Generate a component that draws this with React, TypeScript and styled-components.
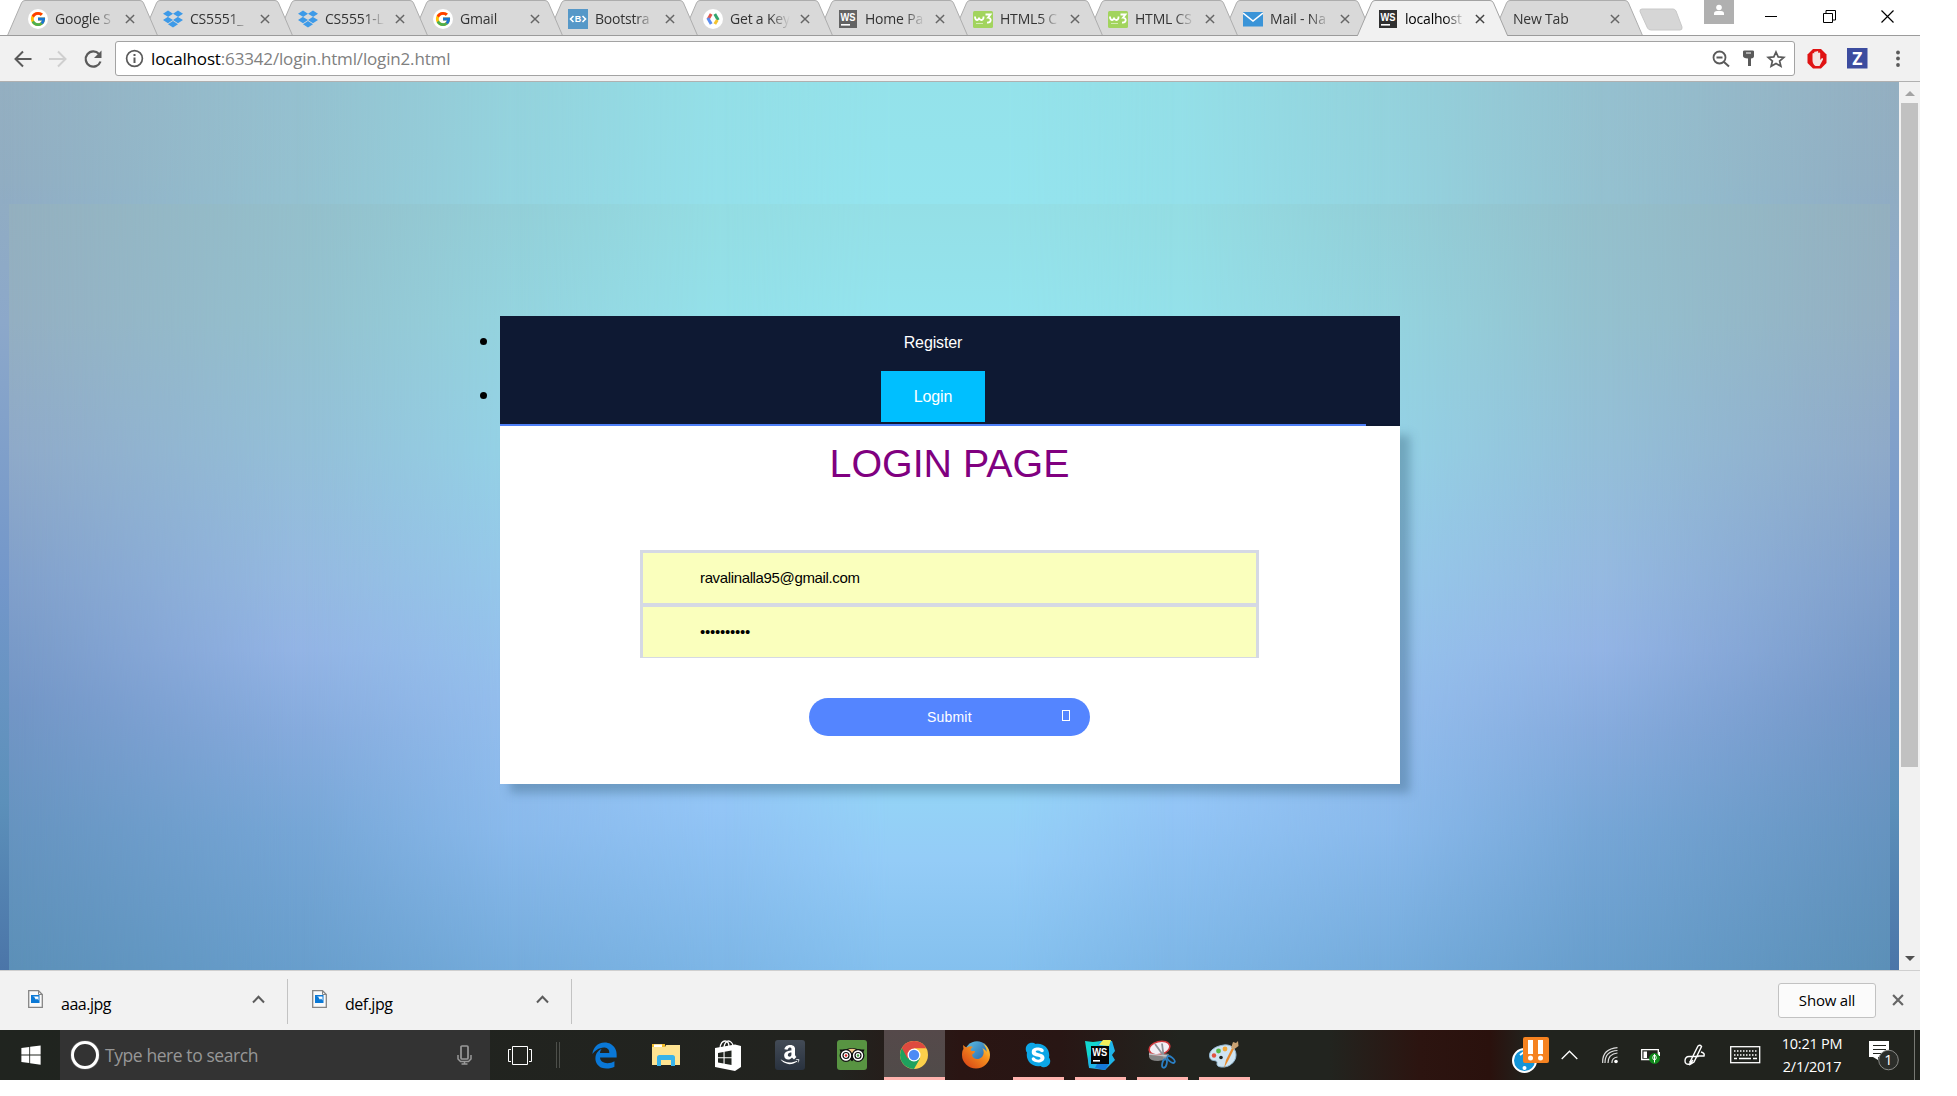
import React from "react";
import styled, { createGlobalStyle, css } from "styled-components";
import { FcGoogle } from "react-icons/fc";
import { FaDropbox, FaAmazon, FaSkype, FaWindows, FaEdgeLegacy } from "react-icons/fa6";

const ui = `"Open Sans", "Noto Sans", sans-serif`;
const arial = `"Liberation Sans", Arial, sans-serif`;

const Global = createGlobalStyle`
  *, *::before, *::after { box-sizing: border-box; }
  body { margin: 0; background: #fff; overflow: hidden; }
  svg { display: block; flex: none; }
`;

const Screen = styled.div`
  width: 1920px;
  height: 1080px;
  display: flex;
  flex-direction: column;
  font-family: ${ui};
`;

/* ---------- tab strip ---------- */

const TabStrip = styled.header`
  height: 36px;
  display: flex;
  align-items: flex-start;
  padding-left: 7px;
  background: linear-gradient(#9b9b9b, #9b9b9b) left bottom / 100% 1px no-repeat #fff;
`;

const TabBox = styled.div<{ $z: number }>`
  position: relative;
  z-index: ${(p) => p.$z};
  width: 151px;
  height: 36px;
  margin-right: -16px;
  padding: 9px 20px 0 21px;
  display: flex;
  flex: none;
`;

const TabShape = styled.svg`
  position: absolute;
  left: 0;
  top: 0;
  z-index: -1;
`;

const Favicon = styled.span`
  width: 20px;
  height: 20px;
  flex: none;
  margin-right: 7px;
`;

const TabTitle = styled.span<{ $active?: boolean; $wide?: boolean }>`
  width: ${(p) => (p.$wide ? 87 : 60)}px;
  height: 20px;
  flex: none;
  white-space: nowrap;
  font-size: 14px;
  line-height: 19px;
  letter-spacing: -0.2px;
  color: ${(p) => (p.$active ? "#000" : "#333")};
  mask-image: linear-gradient(90deg, #000 ${(p) => (p.$wide ? 100 : 66)}%, transparent 100%);
`;

const TabClose = styled.span`
  margin: 5px 0 0 10px;
`;

const NewTabButton = styled.span`
  margin: 8px 0 0 12px;
`;

const UserBadge = styled.span`
  width: 30px;
  height: 24px;
  margin-left: 21px;
  padding: 4px 0 0 9px;
  background: #b0b0b0;
`;

const WindowButtons = styled.div`
  display: flex;
  align-items: center;
  gap: 45px;
  padding: 10px 0 0 31px;
`;

/* ---------- toolbar ---------- */

const Toolbar = styled.div`
  height: 46px;
  display: flex;
  align-items: center;
  padding-left: 13px;
  background: #f1f1f1;
  border-bottom: 1px solid #b0b0b0;
`;

const NavIcons = styled.div`
  display: flex;
  gap: 15px;
  width: 102px;
`;

const AddressBar = styled.div`
  width: 1680px;
  height: 35px;
  display: flex;
  align-items: center;
  padding: 0 8px 0 9px;
  background: #fff;
  border: 1px solid #a3a3a3;
  border-radius: 3px;
`;

const Url = styled.span`
  flex: 1;
  margin-left: 7px;
  font-size: 17px;
  line-height: 30px;
  letter-spacing: -0.16px;
  color: #808080;
`;
const Host = styled.span`
  color: #000;
`;

const BarIcons = styled.div`
  display: flex;
  align-items: center;
  gap: 11px;
`;

const Extensions = styled.div`
  display: flex;
  align-items: center;
  padding-left: 12px;
`;

/* ---------- page ---------- */

const Viewport = styled.div`
  height: 888px;
  display: flex;
`;

const Page = styled.main`
  position: relative;
  width: 1899px;
  height: 888px;
  padding: 122px 9px 0;
  overflow: hidden;
`;

const Panel = styled.section`
  position: relative;
  height: 766px;
  padding: 112px 0 0 491px;
`;

const Backdrop = styled.div<{ $bottom?: number }>`
  position: absolute;
  inset: 0 0 ${(p) => p.$bottom || 0}px;
`;

const BackdropColumn = styled.div<{ $stops: string; $from: number; $to: number }>`
  position: absolute;
  inset: 0;
  background: linear-gradient(${(p) => p.$stops});
  ${(p) =>
    p.$to > 0 &&
    css`
      mask-image: linear-gradient(
        90deg,
        transparent ${p.$from}%,
        #000 ${p.$to}%,
        #000 ${100 - p.$to}%,
        transparent ${100 - p.$from}%
      );
    `}
`;

const Card = styled.div`
  position: relative;
  width: 900px;
`;

const Nav = styled.ul`
  height: 110px;
  margin: 0;
  padding: 0;
  list-style: none;
  background: linear-gradient(#4f80f8, #4f80f8) left bottom / 866px 2px no-repeat #0e1933;
`;

const NavItem = styled.li`
  position: relative;
  height: 54px;
  padding: 1px 34px 2px 0;
  display: flex;
  justify-content: center;
  font-family: ${arial};
  &::before {
    content: "";
    position: absolute;
    left: -20px;
    top: 22px;
    width: 7px;
    height: 7px;
    border-radius: 50%;
    background: #000;
  }
`;

const NavLink = styled.a<{ $active?: boolean }>`
  height: 51px;
  padding: 0 33px;
  font-size: 16px;
  line-height: 52px;
  letter-spacing: -0.12px;
  color: #fff;
  background: ${(p) => (p.$active ? "#00bfff" : "transparent")};
`;

const Form = styled.form`
  height: 358px;
  padding-right: 1px;
  display: flex;
  flex-direction: column;
  align-items: center;
  background: #fff;
  box-shadow: 10px 9px 9px rgba(45, 85, 110, 0.34);
  font-family: ${arial};
`;

const Title = styled.h1`
  margin: 14px 0 0;
  height: 110px;
  font-size: 39.4px;
  font-weight: 400;
  line-height: 46px;
  color: #800080;
`;

const Fields = styled.div`
  width: 619px;
  height: 108px;
  display: flex;
  flex-direction: column;
  gap: 4px;
  padding: 3px 3px 1px;
  background: #d5d9e4;
`;

const Field = styled.div<{ $password?: boolean }>`
  height: 50px;
  padding-left: 57px;
  font-size: 15px;
  line-height: 50px;
  letter-spacing: ${(p) => (p.$password ? "-0.25px" : "-0.36px")};
  background: #faffbd;
  color: #000;
`;

const Submit = styled.button`
  width: 281px;
  height: 38px;
  margin-top: 40px;
  padding: 0 20px 0 118px;
  display: flex;
  align-items: center;
  justify-content: space-between;
  border: 0;
  border-radius: 19px;
  background: #5485ff;
  color: #fff;
  font-family: ${arial};
  font-size: 14px;
  letter-spacing: 0.2px;
`;

const MissingGlyph = styled.span`
  width: 8px;
  height: 11px;
  margin-bottom: 3px;
  border: 1px solid #fff;
`;

const Scrollbar = styled.div`
  width: 21px;
  height: 888px;
  display: flex;
  flex-direction: column;
  align-items: center;
  background: #f1f1f1;
`;

const Thumb = styled.div`
  width: 17px;
  height: 664px;
  margin: 7px 0 189px;
  background: #c1c1c1;
`;

/* ---------- downloads ---------- */

const Downloads = styled.div`
  height: 60px;
  display: flex;
  align-items: center;
  background: #f2f2f2;
  border-top: 1px solid #cfcfcf;
`;

const DownloadItem = styled.div`
  width: 284px;
  height: 45px;
  margin-top: 2px;
  padding: 11px 22px 0 24px;
  display: flex;
  border-right: 1px solid #c3c3c3;
  &:first-child {
    width: 288px;
    padding-left: 28px;
  }
`;

const FileName = styled.span`
  flex: 1;
  margin-left: 18px;
  font-size: 16px;
  line-height: 28px;
  letter-spacing: -0.5px;
  color: #000;
`;

const ShowAll = styled.button`
  width: 98px;
  height: 35px;
  margin: -1px 16px 0 auto;
  padding: 0;
  background: #fbfbfb;
  border: 1px solid #c2c2c2;
  border-radius: 3px;
  font-family: ${ui};
  font-size: 15px;
  line-height: 32px;
  letter-spacing: -0.2px;
  color: #000;
`;

const DownloadsClose = styled.span`
  margin: -1px 16px 0 0;
`;

/* ---------- taskbar ---------- */

const Taskbar = styled.footer`
  height: 50px;
  display: flex;
  align-items: center;
  background: linear-gradient(
    90deg,
    #20241f 0,
    #22231f 840px,
    #2a1513 960px,
    #281614 1060px,
    #22241f 1180px,
    #22241f 1330px,
    #2c1410 1420px,
    #2a110d 1490px,
    #21231e 1530px
  );
`;

const Start = styled.div`
  width: 60px;
  padding-left: 20px;
`;

const Search = styled.div`
  width: 430px;
  height: 50px;
  padding: 0 18px 0 11px;
  display: flex;
  align-items: center;
  background: #333;
`;

const SearchRing = styled.span`
  width: 28px;
  height: 28px;
  border: 3.500px solid #fff;
  border-radius: 50%;
  box-shadow: 0 0 1px #fff;
`;

const SearchHint = styled.span`
  flex: 1;
  margin-left: 6px;
  font-size: 17.5px;
  line-height: 30px;
  letter-spacing: -0.42px;
  color: #979797;
`;

const TaskView = styled.div`
  width: 83px;
  padding-left: 18px;
  display: flex;
  align-items: center;
  gap: 24px;
`;

const Grip = styled.span`
  width: 4px;
  height: 26px;
  border: 1px solid #4d4f4a;
  border-width: 0 1px;
`;

const AppButton = styled.div<{ $state?: "open" | "active" }>`
  width: 62px;
  height: 50px;
  display: flex;
  align-items: center;
  justify-content: center;
  background: ${(p) =>
    p.$state === "active"
      ? "linear-gradient(#ffb3ae,#ffb3ae) center bottom / 61px 3px no-repeat, linear-gradient(#55494a,#504b49) center / 61px 100% no-repeat"
      : p.$state === "open"
        ? "linear-gradient(#ffb3ae,#ffb3ae) center bottom / 51px 3px no-repeat"
        : "none"};
`;

const Tray = styled.div`
  flex: 1;
  height: 50px;
  display: flex;
  align-items: center;
  padding-left: 256px;
`;

const TrayIcon = styled.svg<{ $gap: number }>`
  margin-left: ${(p) => p.$gap}px;
`;

const Clock = styled.div`
  width: 64px;
  margin-left: 19px;
  display: flex;
  flex-direction: column;
  align-items: center;
  font-size: 14.5px;
  line-height: 23px;
  letter-spacing: -0.25px;
  white-space: nowrap;
  color: #fff;
`;

const DesktopEdge = styled.span`
  width: 6px;
  height: 50px;
  margin-left: auto;
  border-left: 1px solid #777873;
`;

/* ---------- drawings ---------- */

const Cross = ({ size = 11, color = "#5a5a5a", w = 1.8 }: { size?: number; color?: string; w?: number }) => (
  <svg width={size} height={size} viewBox="0 0 11 11">
    <path d="M1 1L10 10M10 1L1 10" stroke={color} strokeWidth={w} />
  </svg>
);

const GoogleIcon = () => (
  <svg width="20" height="20">
    <circle cx="10" cy="10" r="10" fill="#fff" />
    <FcGoogle x={1.5} y={1.5} size={17} />
  </svg>
);
const DropboxIcon = () => <FaDropbox size={20} color="#3d9ae8" />;
const BootstrapIcon = () => (
  <svg width="20" height="20">
    <rect width="20" height="20" fill="#5698c8" />
    <path d="M5.5 7L2.5 10L5.5 13M14.5 7L17.5 10L14.5 13" stroke="#fff" strokeWidth="1.6" fill="none" />
    <text x="10" y="13.2" textAnchor="middle" fontFamily="Liberation Sans, sans-serif" fontWeight="700" fontSize="9" fill="#fff">B</text>
  </svg>
);
const DevelopersIcon = () => (
  <svg width="20" height="20">
    <circle cx="10" cy="10" r="10" fill="#fff" />
    <g fill="none" strokeWidth="3">
      <path d="M8.200 5L5 10.500" stroke="#e2574c" />
      <path d="M4.800 9L8.200 15" stroke="#5a8df0" />
      <path d="M11.800 5L15.200 11" stroke="#34a56f" />
      <path d="M14.300 11L11.800 15" stroke="#f4c430" />
    </g>
  </svg>
);
const WsIcon = ({ color = "#636363" }: { color?: string }) => (
  <svg width="20" height="20">
    <rect x="1" y="1" width="18" height="18" fill={color} />
    <text x="10" y="11.500" textAnchor="middle" fontFamily="Liberation Sans, sans-serif" fontWeight="700" fontSize="11" textLength="15" lengthAdjust="spacingAndGlyphs" fill="#fff">WS</text>
    <rect x="3" y="15" width="9" height="1.6" fill="#fff" />
  </svg>
);
const W3Icon = () => (
  <svg width="20" height="20">
    <rect y="2" width="20" height="17" rx="1.5" fill="#a2d45e" />
    <path d="M2 7.500c0 4.500 3.800 4.500 4 1c.2 3.500 5 3.500 4.500-1M12.500 5.500h5l-2.500 3.200c4 0 3.500 5.300-1 4.800" fill="none" stroke="#fff" strokeWidth="1.800" />
    <path d="M3 14.500h7" stroke="#d4ecb5" />
  </svg>
);
const MailIcon = () => (
  <svg width="20" height="20">
    <rect y="3" width="20" height="14.500" fill="#3a94d8" />
    <path d="M0 4L10 12L20 4" stroke="#fff" strokeWidth="1.600" fill="none" />
  </svg>
);

const DocIcon = () => (
  <svg width="15" height="18" viewBox="0 0 15 18">
    <path d="M.7.700H10.500L14.300 4.500V17.300H.7Z" fill="#fafafa" stroke="#858585" strokeWidth="1.300" />
    <path d="M10.500.700V4.500H14.300" fill="none" stroke="#858585" />
    <rect x="3" y="5" width="8.500" height="8" fill="#0b79d6" />
    <path d="M4.500 6.500h6v4l-1.500-2l-1 1.300l-1.500-2.300v-.5z" fill="#fff" />
  </svg>
);

const StoreIcon = () => (
  <svg width="26" height="31" viewBox="0 0 26 31">
    <path d="M0 8L20 4.500L26 6V27L20 31L0 27Z" fill="#fff" />
    <path d="M5 9C5 3 8 1 10 1S14 3 14 7M9 7C10 2 12 1 13.500 1S18 3 18 6" fill="none" stroke="#fff" strokeWidth="1.300" />
    <path d="M3 13L8.500 12V17.200H3ZM9.600 11.800L16.500 10.500V17.200H9.600ZM3 18.300H8.500V23.500L3 22.600ZM9.600 18.300H16.500V25L9.600 23.700Z" fill="#20241f" />
  </svg>
);
const ExplorerIcon = () => (
  <svg width="28" height="24" viewBox="0 0 28 24">
    <path d="M0 1H13V4H0Z" fill="#f3bd2a" />
    <rect x="2" y="1.500" width="8" height="2.500" fill="#fff" />
    <path d="M0 4H13L14 2H28V22H0Z" fill="#fee391" />
    <path d="M5 23V14.500Q5 12 7.500 12H20.500Q23 12 23 14.500V23H19V17H9V23Z" fill="#38b3ea" />
  </svg>
);
const AmazonIcon = () => (
  <svg width="30" height="30">
    <defs>
      <linearGradient id="amz" x2="0" y2="1">
        <stop stopColor="#434b56" />
        <stop offset="1" stopColor="#29323f" />
      </linearGradient>
    </defs>
    <rect width="30" height="30" rx="3" fill="url(#amz)" />
    <FaAmazon x={4} y={3.5} size={22} color="#fff" />
  </svg>
);
const TripIcon = () => (
  <svg width="30" height="30">
    <rect width="30" height="30" rx="3" fill="#589442" />
    <path d="M2.500 9.500H8Q15 6.500 22 9.500H27.500L26 13L15 21L4 13Z" fill="#111" />
    <path d="M11 9.500Q15 8 19 9.500L15 14Z" fill="#f6c88a" />
    {[9, 21].map((x) => (
      <g key={x}>
        <circle cx={x} cy="15.500" r="5.800" fill="#fff" stroke="#111" strokeWidth="1.300" />
        <circle cx={x} cy="15.500" r="3" fill="#fff" stroke="#111" strokeWidth="1.200" />
        <circle cx={x} cy="15.500" r="1.200" fill={x === 9 ? "#d22" : "#3a9a3a"} />
      </g>
    ))}
    <path d="M13.500 18.500L15 21.500L16.500 18.500Z" fill="#111" />
  </svg>
);
const ChromeIcon = () => (
  <svg width="28" height="28" viewBox="0 0 28 28">
    <circle cx="14" cy="14" r="14" fill="#fcd04b" />
    <path d="M14 14L1.900 7A14 14 0 0 0 14 28L20 17.500Z" fill="#1ea15e" />
    <path d="M14 14L7.500 17.500L1.900 7A14 14 0 0 1 26.200 7.300H14Z" fill="#de4a3f" />
    <circle cx="14" cy="14" r="6.500" fill="#fff" />
    <circle cx="14" cy="14" r="5.200" fill="#4c8bf5" />
  </svg>
);
const FirefoxIcon = () => (
  <svg width="28" height="28" viewBox="0 0 28 28">
    <defs>
      <linearGradient id="ffb" x1="0" y1="0" x2="1" y2="1">
        <stop stopColor="#5ec4e8" />
        <stop offset="1" stopColor="#1d4f9c" />
      </linearGradient>
      <linearGradient id="ffo" x1="1" y1="0" x2="0" y2="1">
        <stop stopColor="#ffe24a" />
        <stop offset=".35" stopColor="#f7931e" />
        <stop offset="1" stopColor="#d53a15" />
      </linearGradient>
    </defs>
    <circle cx="15" cy="12.500" r="12.300" fill="url(#ffb)" />
    <path d="M1 4C1 4 3 6 5 6.500C7 5 9 5 11 6C9 7 8.500 8.500 9 10H13C13 12 11 12.500 10 14C11 19 17 19 20 16C22.500 13 22 9 20 7C23 8 24 10 24.500 11C25 8 23 4 20 2C25 4 28 9 28 14A14 13.500 0 0 1 0 14C0 11 .5 9 1.500 8Z" fill="url(#ffo)" />
  </svg>
);
const SkypeIcon = () => (
  <svg width="28" height="28">
    <circle cx="14" cy="14" r="10" fill="#fff" />
    <FaSkype size={28} color="#0ca6e6" />
  </svg>
);
const WebstormIcon = () => (
  <svg width="30" height="30" viewBox="0 0 30 30">
    <path d="M0 1L8 2L16 1L12 12L4 27Z" fill="#12d6cf" />
    <path d="M15 1L27 1L30 11L27 15L30 20L22 28L20 30L4 28L3 18Z" fill="#1fb4e8" />
    <path d="M14 5L18 0H26L24 6Z" fill="#f3f05a" />
    <path d="M12 24H24L20 30L10 28Z" fill="#1579d8" />
    <rect x="6" y="6" width="18" height="18" fill="#050505" />
    <text x="14.700" y="15.500" textAnchor="middle" fontFamily="Liberation Sans, sans-serif" fontWeight="700" fontSize="10.500" textLength="15" lengthAdjust="spacingAndGlyphs" fill="#fff">WS</text>
    <rect x="8" y="20" width="7" height="1.600" fill="#fff" />
  </svg>
);
const SnipIcon = () => (
  <svg width="28" height="30" viewBox="0 0 28 30">
    <path d="M1 11V17Q2 21 10 21Q20 20 21 14Z" fill="#858585" />
    <ellipse cx="11.500" cy="8" rx="10.500" ry="6.500" transform="rotate(-14 11.500 8)" fill="#f3eff5" stroke="#d0393d" strokeWidth="1.500" />
    <path d="M7 4L18 19M14 3.500L16 19" stroke="#8f9298" strokeWidth="1.800" />
    <path d="M1 14L19 16" stroke="#c5c5c8" strokeWidth="1.400" />
    <ellipse cx="16.500" cy="23.500" rx="2.200" ry="4.300" transform="rotate(14 16.500 23.500)" fill="none" stroke="#2a7fc4" strokeWidth="1.800" />
    <ellipse cx="23" cy="19.500" rx="2.200" ry="4.500" transform="rotate(-50 23 19.500)" fill="none" stroke="#2a7fc4" strokeWidth="1.800" />
  </svg>
);
const PaintIcon = () => (
  <svg width="30" height="28" viewBox="0 0 30 28">
    <path d="M15 4C22 3 27 8 27 14C27 21 20 27 12 26C5 25 10 21 7 20C4 19 1 20 .5 15C0 9 7 5 15 4Z" fill="#cfe4f2" stroke="#93b7d0" />
    <circle cx="12" cy="16.500" r="1.800" fill="#20241f" />
    <circle cx="5" cy="14.500" r="2.200" fill="#e25241" />
    <circle cx="9.500" cy="10" r="2.400" fill="#57b847" />
    <circle cx="16" cy="8" r="2.400" fill="#f2a73a" />
    <path d="M15 27L17 19L23 7L25 8L19 20Z" fill="#e8892b" />
    <path d="M22 7L24 1L27 2L29 0L29.500 5L25.500 8Z" fill="#c9a273" />
  </svg>
);

/* ---------- data ---------- */

const tabs = [
  { icon: <GoogleIcon />, title: "Google S" },
  { icon: <DropboxIcon />, title: "CS5551_" },
  { icon: <DropboxIcon />, title: "CS5551-L" },
  { icon: <GoogleIcon />, title: "Gmail" },
  { icon: <BootstrapIcon />, title: "Bootstra" },
  { icon: <DevelopersIcon />, title: "Get a Key" },
  { icon: <WsIcon />, title: "Home Pa" },
  { icon: <W3Icon />, title: "HTML5 C" },
  { icon: <W3Icon />, title: "HTML CS" },
  { icon: <MailIcon />, title: "Mail - Na" },
  { icon: <WsIcon color="#303030" />, title: "localhost", active: true },
  { icon: null, title: "New Tab" },
];

const apps: { icon: React.ReactNode; state?: "open" | "active" }[] = [
  { icon: <FaEdgeLegacy size={27} color="#0a78d7" /> },
  { icon: <ExplorerIcon /> },
  { icon: <StoreIcon /> },
  { icon: <AmazonIcon /> },
  { icon: <TripIcon /> },
  { icon: <ChromeIcon />, state: "active" },
  { icon: <FirefoxIcon /> },
  { icon: <SkypeIcon />, state: "open" },
  { icon: <WebstormIcon />, state: "open" },
  { icon: <SnipIcon />, state: "open" },
  { icon: <PaintIcon />, state: "open" },
];

const outerColumns = [
  { from: 0, to: 0, stops: "#94afc1 0, #91adc2 100px, #8ca8ca 240px, #7397ca 500px, #5c90ba 720px, #4b75a8 888px" },
  { from: 0, to: 15.5, stops: "#95c0cf 0, #94c1d0 122px" },
  { from: 15.5, to: 27, stops: "#94d2dc 0, #94d4e0 122px" },
  { from: 27, to: 38, stops: "#94dfe7 0, #94e0ea 122px" },
  { from: 38, to: 47, stops: "#94e2ea 0, #94e4ee 122px" },
];
const sideColumn = [outerColumns[0]];
const innerColumns = [
  { from: 0, to: 0, stops: "#94b0bf 0, #94afc2 116px, #8faac9 246px, #81a0cb 376px, #7396c6 496px, #6694c0 626px, #5c90b8 766px" },
  { from: 0, to: 15.5, stops: "#94bfcb 0, #94c1cf 116px, #94bfd8 246px, #95b9e1 376px, #93b4e5 446px, #86abdd 526px, #76a6d6 626px, #689ecc 766px" },
  { from: 15.5, to: 27, stops: "#93cfd8 0, #94d4df 116px, #94d2e6 246px, #95c8ea 376px, #94beed 496px, #8abaec 626px, #75acdc 766px" },
  { from: 27, to: 38, stops: "#94dde3 0, #94e1ea 116px, #94dcec 246px, #94d4ee 376px, #94cdf3 496px, #93c5f6 606px, #7db6e6 766px" },
  { from: 38, to: 47, stops: "#94dfe6 0, #94e4ee 116px, #94dcee 376px, #94d4f6 586px, #94ccf7 656px, #84c0ee 766px" },
];

const Gradient = ({ columns, bottom }: { columns: typeof innerColumns; bottom?: number }) => (
  <Backdrop $bottom={bottom}>
    {columns.map((c, i) => (
      <BackdropColumn key={i} $stops={c.stops} $from={c.from} $to={c.to} />
    ))}
  </Backdrop>
);

const Tab = ({ icon, title, active, z }: { icon: React.ReactNode; title: string; active?: boolean; z: number }) => (
  <TabBox $z={z}>
    <TabShape width="151" height="36">
      <path
        d="M.5 35.500L14.500 3Q15.500.500 18 .500H133Q135.500.500 136.500 3L150.500 35.500"
        fill={active ? "#f1f1f1" : "#d9d9d9"}
        stroke={active ? "#a3a3a3" : "#adadad"}
      />
      <path d={active ? "M1 35.500H150" : "M0 35.500H151"} stroke={active ? "#f1f1f1" : "#9b9b9b"} />
    </TabShape>
    {icon && <Favicon>{icon}</Favicon>}
    <TabTitle $active={active} $wide={!icon}>{title}</TabTitle>
    <TabClose>
      <Cross size={10} color={active ? "#444" : "#666"} w={1.600} />
    </TabClose>
  </TabBox>
);

export default function App() {
  return (
    <Screen>
      <Global />
      <TabStrip>
        {tabs.map((t, i) => (
          <Tab key={i} {...t} z={t.active ? 30 : 20 - i} />
        ))}
        <NewTabButton>
          <svg width="44" height="23">
            <path d="M3 1H34Q36 1 37 3L43 19Q43.500 22 41 22H12Q9.500 22 8.500 20L1 3.500Q.5 1 3 1Z" fill="#d6d6d6" stroke="#c8c8c8" />
          </svg>
        </NewTabButton>
        <UserBadge>
          <svg width="12" height="12" viewBox="0 0 12 12">
            <circle cx="6" cy="3.500" r="2.800" fill="#fff" />
            <path d="M1 11V9.500Q1 7 4 7H8Q11 7 11 9.500V11Z" fill="#fff" />
          </svg>
        </UserBadge>
        <WindowButtons>
          <svg width="13" height="13"><path d="M0 6.500H12" stroke="#000" /></svg>
          <svg width="13" height="13"><path d="M.5 3.500H9.500V12.500H.5ZM3 3V.500H12.500V10H10" fill="none" stroke="#000" /></svg>
          <svg width="13" height="13"><path d="M.5.500L12.500 12.500M12.500.500L.5 12.500" stroke="#000" strokeWidth="1.200" /></svg>
        </WindowButtons>
      </TabStrip>

      <Toolbar>
        <NavIcons>
          <svg width="20" height="20"><path d="M18.500 10H3M10 2.500L2.500 10L10 17.500" fill="none" stroke="#5a5a5a" strokeWidth="2" /></svg>
          <svg width="20" height="20"><path d="M1 10H17M10 2.500L17.500 10L10 17.500" fill="none" stroke="#cfcfcf" strokeWidth="2" /></svg>
          <svg width="20" height="20">
            <path d="M16 5A7.600 7.600 0 1 0 17.500 12.500" fill="none" stroke="#5a5a5a" strokeWidth="2.200" />
            <path d="M18.500 1.500V9H11Z" fill="#5a5a5a" />
          </svg>
        </NavIcons>
        <AddressBar>
          <svg width="19" height="19">
            <circle cx="9.500" cy="9.500" r="7.900" fill="none" stroke="#5a5a5a" strokeWidth="1.700" />
            <path d="M9.500 8.500V14M9.500 5V7" stroke="#5a5a5a" strokeWidth="2" />
          </svg>
          <Url><Host>localhost</Host>:63342/login.html/login2.html</Url>
          <BarIcons>
            <svg width="19" height="18">
              <circle cx="7.500" cy="7.500" r="6" fill="none" stroke="#5a5a5a" strokeWidth="1.800" />
              <path d="M4.500 7.500H10.500M12 12L17 16.500" stroke="#5a5a5a" strokeWidth="2" />
            </svg>
            <svg width="13" height="17">
              <path d="M1 1.500Q1 .500 2.500.500H10.500Q12 .500 12 1.500V6Q12 8 9 8.500V16H6V8.500Q1 8 1 6Z" fill="#5a5a5a" />
              <path d="M4 3H9" stroke="#fff" />
            </svg>
            <svg width="20" height="18" viewBox="0 0 20 18">
              <path d="M10 2L12.200 6.900L17.800 7.400L13.600 11L14.900 16.300L10 13.500L5.100 16.300L6.400 11L2.200 7.400L7.800 6.900Z" fill="none" stroke="#5a5a5a" strokeWidth="1.700" />
            </svg>
          </BarIcons>
        </AddressBar>
        <Extensions>
          <svg width="20" height="20">
            <path d="M6 0H14L19.500 5.500V14L14 19.500H6L.5 14V5.500Z" fill="#e01313" />
            <path d="M5.500 11V4.500Q6.500 3.500 7.200 4.500V9V3Q8.300 2 9.200 3V9V2.500Q10.300 1.500 11.200 2.500V9V4Q12.300 3 13.200 4V11L15 9Q16.500 9 16 10.500L12.500 17H8.500Q5.500 15 5.500 11Z" fill="#f3e4e2" />
          </svg>
          <svg width="61" height="21" viewBox="-20 0 61 21">
            <rect x="0" y="0" width="20.500" height="20.500" fill="#3c4c9f" />
            <text x="10.300" y="16.500" textAnchor="middle" fontFamily="Open Sans, sans-serif" fontWeight="700" fontSize="17.500" fill="#fff">Z</text>
          </svg>
          <TrayIcon $gap={8} width="4" height="18">
            {[2.500, 8.500, 15].map((y) => <circle key={y} cx="2" cy={y} r="1.900" fill="#5a5a5a" />)}
          </TrayIcon>
        </Extensions>
      </Toolbar>

      <Viewport>
        <Page>
          <Gradient columns={sideColumn} />
          <Gradient columns={outerColumns.map((c, i) => (i ? c : { ...c, stops: "#94afc1 0, #91adc2 100px, #90acc4 122px" }))} bottom={766} />
          <Panel>
            <Gradient columns={innerColumns} />
            <Card>
              <Nav>
                <NavItem><NavLink>Register</NavLink></NavItem>
                <NavItem><NavLink $active>Login</NavLink></NavItem>
              </Nav>
              <Form>
                <Title>LOGIN PAGE</Title>
                <Fields>
                  <Field>ravalinalla95@gmail.com</Field>
                  <Field $password>••••••••••</Field>
                </Fields>
                <Submit type="button">
                  Submit
                  <MissingGlyph />
                </Submit>
              </Form>
            </Card>
          </Panel>
        </Page>
        <Scrollbar>
          <svg width="10" height="14">
            <path d="M0 14L5 9L10 14Z" fill="#a3a3a3" />
          </svg>
          <Thumb />
          <svg width="10" height="5"><path d="M0 0H10L5 5Z" fill="#505050" /></svg>
        </Scrollbar>
      </Viewport>

      <Downloads>
        {["aaa.jpg", "def.jpg"].map((name) => (
          <DownloadItem key={name}>
            <DocIcon />
            <FileName>{name}</FileName>
            <svg width="13" height="16" viewBox="0 -5 13 16"><path d="M1 7.500L6.500 1.800L12 7.500" fill="none" stroke="#5c5c5c" strokeWidth="2" /></svg>
          </DownloadItem>
        ))}
        <ShowAll>Show all</ShowAll>
        <DownloadsClose><Cross size={12} color="#666" w={2} /></DownloadsClose>
      </Downloads>

      <Taskbar>
        <Start><FaWindows size={22} color="#fff" /></Start>
        <Search>
          <SearchRing />
          <SearchHint>Type here to search</SearchHint>
          <svg width="15" height="20">
            <rect x="4" y="1" width="7" height="13" fill="none" stroke="#999" strokeWidth="1.700" rx="1" />
            <path d="M1 10V14L3.500 16.500H11.500L14 14V10M7.500 16.500V19M4.500 19H10.500" fill="none" stroke="#999" strokeWidth="1.500" />
          </svg>
        </Search>
        <TaskView>
          <svg width="24" height="19">
            <path d="M4.500.500H19.500V18.500H4.500ZM3 3.500H.500V15.500H3M21 3.500H23.500V15.500H21" fill="none" stroke="#fff" />
          </svg>
          <Grip />
        </TaskView>
        {apps.map((a, i) => (
          <AppButton key={i} $state={a.state}>{a.icon}</AppButton>
        ))}
        <Tray>
          <svg width="38" height="38">
            <circle cx="13.500" cy="24.500" r="11.500" fill="#1294d8" stroke="#fff" strokeWidth="2" />
            <path d="M9 19l4-3" stroke="#fff" strokeWidth="2" />
            <circle cx="13.500" cy="32" r="2" fill="#fff" />
            <rect x="12" y="1" width="26" height="26" rx="2" fill="#f58220" />
            <path d="M17 4H22V18H17ZM27 4H32V18H27Z" fill="#fff" />
            <circle cx="19.500" cy="22" r="2.500" fill="#fff" />
            <circle cx="29.500" cy="22" r="2.500" fill="#fff" />
          </svg>
          <TrayIcon $gap={12} width="17" height="10"><path d="M.7 9L8.500 1.200L16.300 9" fill="none" stroke="#fff" strokeWidth="1.300" /></TrayIcon>
          <TrayIcon $gap={24} width="17" height="17">
            <circle cx="14" cy="14.500" r="1.800" fill="#fff" />
            <path d="M10 16Q9.500 11 15.500 10M6 16Q6 7 15.500 6M3 16Q3 4 15.500 3.500M.7 16Q0 2 15.500.700" fill="none" stroke="#ddd" strokeWidth="1.200" />
          </TrayIcon>
          <TrayIcon $gap={22} width="20" height="17">
            <path d="M.7 2.700H17.300V12.500H.7Z" fill="none" stroke="#fff" strokeWidth="1.300" />
            <path d="M18.500 5V9" stroke="#fff" />
            <rect x="2.500" y="4.500" width="3.500" height="6.500" fill="#fff" />
            <circle cx="13.500" cy="11.500" r="5.400" fill="#118a1c" />
            <path d="M13.500 7.500Q17 11 13.500 13.500Q10 11 13.500 7.500V15.500" stroke="#fff" fill="none" />
          </TrayIcon>
          <TrayIcon $gap={23} width="21" height="22">
            <path d="M9 16L6 20Q1 21 1 17Q1 12.500 5 12.500H14.500M6 18L14 2Q16 .5 17.500 2.500L10 18L6 20.500V17M17 8Q21 9 20 12H14" fill="none" stroke="#fff" strokeWidth="1.400" />
          </TrayIcon>
          <TrayIcon $gap={25} width="31" height="18">
            <rect x=".7" y=".7" width="29" height="16" fill="none" stroke="#fff" strokeWidth="1.300" />
            <path d="M4 5H27M4 9H27" stroke="#fff" strokeWidth="1.500" strokeDasharray="1.500 1.500" />
            <path d="M4 12.500H7M9 12.500H21M23 12.500H27" stroke="#fff" strokeWidth="1.500" />
          </TrayIcon>
          <Clock><span>10:21 PM</span><span>2/1/2017</span></Clock>
          <TrayIcon $gap={25} width="31" height="31">
            <path d="M0 1H20V17H9V20L4 17H0Z" fill="#fff" />
            <path d="M4 5.500H17M4 9.500H17M4 13.500H12" stroke="#22241f" />
            <circle cx="19.500" cy="20" r="9.800" fill="#2c2e2a" stroke="#8a8b88" />
            <text x="19.500" y="25" textAnchor="middle" fontFamily="Open Sans, sans-serif" fontSize="14.500" fill="#fff">1</text>
          </TrayIcon>
          <DesktopEdge />
        </Tray>
      </Taskbar>
    </Screen>
  );
}
